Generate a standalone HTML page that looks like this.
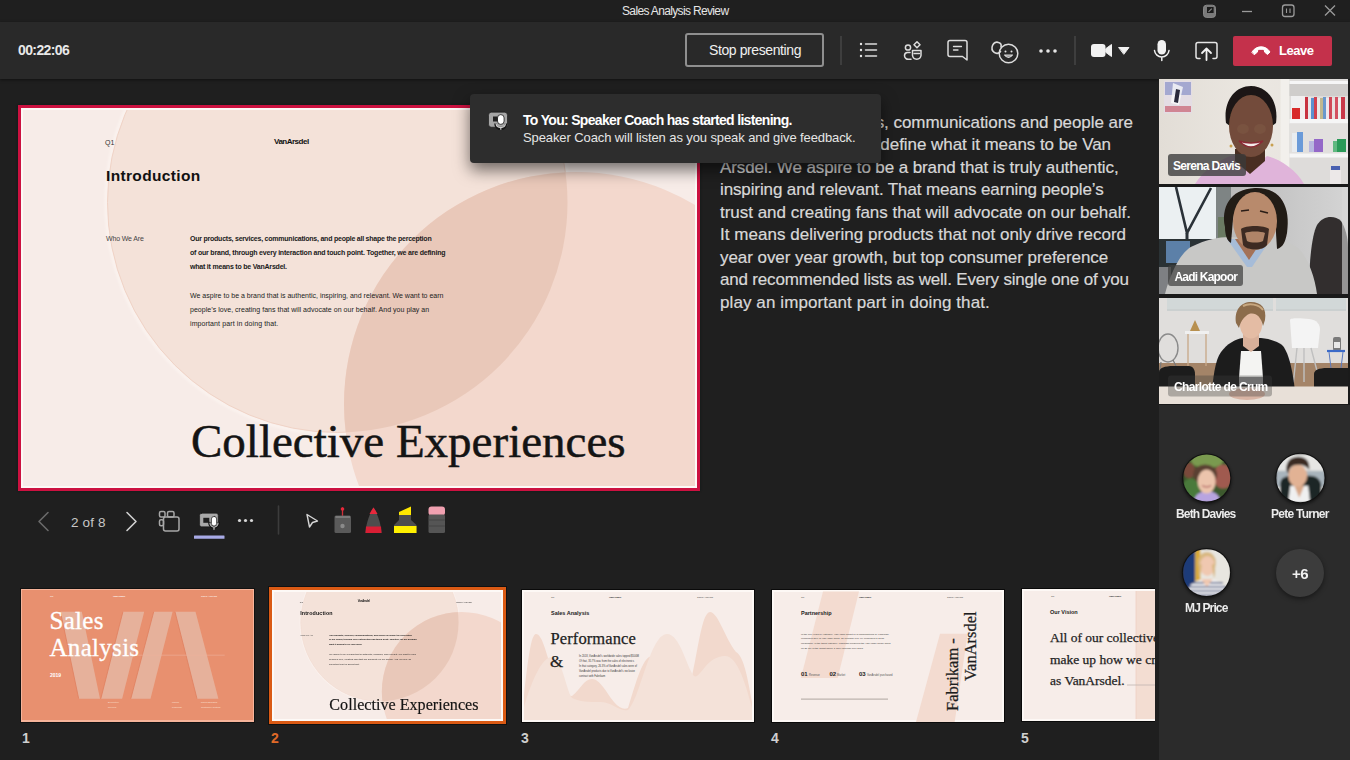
<!DOCTYPE html>
<html><head><meta charset="utf-8">
<style>
*{margin:0;padding:0;box-sizing:border-box}
html,body{width:1350px;height:760px;overflow:hidden;background:#1f1f1f;font-family:"Liberation Sans",sans-serif;color:#fff}
.a{position:absolute}
.t{position:absolute;white-space:nowrap;line-height:1}
svg{position:absolute;overflow:visible}
</style></head><body>

<!-- title bar -->
<div class="a" style="left:0;top:0;width:1350px;height:22px;background:#1f1f1f"></div>
<div class="t" style="left:622px;top:5px;font-size:12px;letter-spacing:-0.65px;color:#e6e6e6">Sales Analysis Review</div>

<!-- toolbar -->
<div class="a" style="left:0;top:22px;width:1350px;height:57px;background:#292929;box-shadow:0 1px 3px rgba(0,0,0,.5)"></div>
<div class="t" style="left:18px;top:43px;font-size:14px;font-weight:700;letter-spacing:-0.6px;color:#e8e8e8">00:22:06</div>

<!-- stop presenting -->
<div class="a" style="left:685px;top:33px;width:139px;height:34px;border:2px solid #8f8f8f;border-radius:3px"></div>
<div class="t" style="left:709px;top:43px;font-size:14px;letter-spacing:-0.4px;color:#f0f0f0">Stop presenting</div>
<div class="a" style="left:840px;top:36px;width:2px;height:29px;background:#3e3e3e"></div>
<div class="a" style="left:1074px;top:36px;width:2px;height:29px;background:#3e3e3e"></div>

<!-- leave -->
<div class="a" style="left:1233px;top:36px;width:99px;height:30px;background:#c4314b;border-radius:2px"></div>
<div class="t" style="left:1279px;top:44px;font-size:13px;font-weight:700;letter-spacing:-0.5px;color:#fff">Leave</div>


<!-- window controls -->
<svg width="1350" height="22" style="left:0;top:0" fill="none" stroke="#9a9a9a" stroke-width="1.3">
 <rect x="1203.5" y="5.2" width="12" height="12.2" rx="3" fill="#7a7a7a" stroke="#888" stroke-width="1"/>
 <rect x="1207" y="7" width="6.6" height="6" fill="#1c1c1c" stroke="none"/>
 <path d="M1208.5 11.8 L1211.8 8.6" stroke="#8a8a8a" stroke-width="1.1"/>
 <path d="M1242 11.5 H1252"/>
 <rect x="1282.5" y="5" width="11.5" height="11.5" rx="2.5"/>
 <path d="M1286.5 8.5 V13 M1290 8.5 V13" stroke-width="1.1"/>
 <path d="M1325 5.5 L1335 15.5 M1335 5.5 L1325 15.5"/>
</svg>

<!-- toolbar icons -->
<svg width="1350" height="79" style="left:0;top:0" fill="none" stroke="#dcdcdc" stroke-width="1.5" stroke-linecap="round" stroke-linejoin="round">
 <!-- list -->
 <g fill="#e6e6e6" stroke="none"><circle cx="861" cy="44" r="1.2"/><circle cx="861" cy="50" r="1.2"/><circle cx="861" cy="56" r="1.2"/></g>
 <path d="M865.5 44 H876.5 M865.5 50 H876.5 M865.5 56 H876.5"/>
 <!-- people -->
 <circle cx="908" cy="47.5" r="2.6"/>
 <path d="M910 52.5 H907.5 A3.2 3.2 0 0 0 904.5 55.7 A3.8 3.8 0 0 0 908.5 59.3 H911"/>
 <path d="M917 41.8 L920 44.8 L917 47.8 L914 44.8 Z"/>
 <path d="M912.5 50.5 V55.5 A4.3 4.3 0 0 0 921 55.5 V50.5 Z"/>
 <path d="M914 53.5 H919.5" stroke-width="1.3"/>
 <!-- chat -->
 <path d="M950 40.5 H965 A2 2 0 0 1 967 42.5 V60 L962.5 56.5 H950 A2 2 0 0 1 948 54.5 V42.5 A2 2 0 0 1 950 40.5 Z"/>
 <path d="M953.5 46.5 H961.5 M953.5 50 H958" stroke-width="1.3"/>
 <!-- react -->
 <circle cx="1008.5" cy="53.5" r="9.3"/>
 <circle cx="1005.5" cy="51.5" r="1" fill="#e6e6e6" stroke="none"/>
 <circle cx="1011.5" cy="51.5" r="1" fill="#e6e6e6" stroke="none"/>
 <path d="M1004.5 55 Q1008.5 60 1012.5 55 Z" fill="#9a9a9a" stroke-width="1.2"/>
 <path d="M1000.5 51.5 A4.8 5.6 0 1 1 998.5 42.5 C1001 43 1001.5 45 1001 47" stroke-width="1.6"/>
 <circle cx="997.5" cy="49.5" r="1.1" fill="#222" stroke="none"/>
 <!-- more -->
 <g fill="#e6e6e6" stroke="none"><circle cx="1041" cy="51" r="1.8"/><circle cx="1048" cy="51" r="1.8"/><circle cx="1055" cy="51" r="1.8"/></g>
 <!-- camera -->
 <rect x="1091" y="44" width="14.5" height="13" rx="3" fill="#f2f2f2" stroke="none"/>
 <path d="M1106 48.5 L1111.5 44.5 V56.5 L1106 52.5 Z" fill="#f2f2f2" stroke="#f2f2f2" stroke-width="1"/>
 <path d="M1119 47.5 H1129 L1124 54 Z" fill="#f2f2f2" stroke="#f2f2f2" stroke-width="1"/>
 <!-- mic -->
 <rect x="1157.5" y="40" width="8.5" height="14.5" rx="4.25" fill="#f2f2f2" stroke="none"/>
 <path d="M1154.5 50.5 A7.3 7.3 0 0 0 1169 50.5 M1161.8 57.8 V60.5" stroke="#f2f2f2"/>
 <!-- share -->
 <path d="M1200 58.5 H1198 A2 2 0 0 1 1196 56.5 V44.5 A2 2 0 0 1 1198 42.5 H1215 A2 2 0 0 1 1217 44.5 V56.5 A2 2 0 0 1 1215 58.5 H1213" stroke="#e6e6e6"/>
 <path d="M1206.5 60 V48.5 M1202 53 L1206.5 48.5 L1211 53" stroke="#f2f2f2" stroke-width="1.8"/>
 <!-- phone -->
 <path d="M1252 52 C1256 45 1266 45 1270 52 L1267.5 54.5 L1264.5 52 V50 C1262 49 1260 49 1257.5 50 V52 L1254.5 54.5 Z" fill="#fff" stroke="#fff" stroke-width="1"/>
</svg>

<!-- main slide frame -->
<div class="a" style="left:18px;top:105px;width:682px;height:386px;background:#cc1140;box-shadow:0 0 2px #0c1a18"></div>
<div class="a" id="slide" style="left:21px;top:108px;width:676px;height:380px;background:#f7ece8;overflow:hidden">
<svg width="676" height="380" style="left:0;top:0">
 <defs>
  <clipPath id="cA"><circle cx="316.5" cy="94.5" r="230"/></clipPath>
  <filter id="bl" x="-10%" y="-10%" width="120%" height="120%"><feGaussianBlur stdDeviation="1.2"/></filter>
 </defs>
 <circle cx="316.5" cy="94.5" r="231.5" fill="none" stroke="#fbf3ef" stroke-width="3" filter="url(#bl)"/>
 <circle cx="316.5" cy="94.5" r="230" fill="#f4e2d9" stroke="#f0d3c6" stroke-width="1"/>
 <circle cx="555" cy="296" r="232" fill="#f3d8cd"/>
 <circle cx="555" cy="296" r="232" fill="#e9c8b9" clip-path="url(#cA)"/>
</svg>
<div class="t" style="left:84px;top:31px;font-size:7px;color:#333">Q1</div>
<div class="t" style="left:253px;top:30px;font-size:8px;font-weight:700;letter-spacing:-0.5px;color:#111">VanArsdel</div>
<div class="t" style="left:85px;top:60px;font-size:15.5px;font-weight:700;letter-spacing:0.35px;color:#111">Introduction</div>
<div class="t" style="left:85px;top:127px;font-size:7px;letter-spacing:-0.15px;color:#444">Who We Are</div>
<div class="t" style="left:169px;top:127px;font-size:7px;font-weight:700;letter-spacing:-0.23px;color:#1a1a1a">Our products, services, communications, and people all shape the perception</div>
<div class="t" style="left:169px;top:141px;font-size:7px;font-weight:700;letter-spacing:-0.2px;color:#1a1a1a">of our brand, through every interaction and touch point. Together, we are defining</div>
<div class="t" style="left:169px;top:155px;font-size:7px;font-weight:700;letter-spacing:-0.21px;color:#1a1a1a">what it means to be VanArsdel.</div>
<div class="t" style="left:169px;top:184px;font-size:7px;letter-spacing:0.01px;color:#222">We aspire to be a brand that is authentic, inspiring, and relevant. We want to earn</div>
<div class="t" style="left:169px;top:198px;font-size:7px;letter-spacing:0.03px;color:#222">people’s love, creating fans that will advocate on our behalf. And you play an</div>
<div class="t" style="left:169px;top:212px;font-size:7px;letter-spacing:0.11px;color:#222">important part in doing that.</div>
<div class="t" style="left:170px;top:310px;font-family:'Liberation Serif',serif;font-size:47px;color:#141414;-webkit-text-stroke:0.5px #141414">Collective Experiences</div>
</div>

<div class="a" style="left:21px;top:108px;width:676px;height:380px;box-shadow:inset 0 0 0 2px #fdf9f6"></div>
<!-- notes -->
<div class="t" style="right:217px;top:114px;font-size:17px;letter-spacing:-0.05px;color:#d8d8d8;-webkit-text-stroke:0.2px #d8d8d8">Our products, services, communications and people are</div>
<div class="t" style="right:239px;top:136px;font-size:17px;letter-spacing:-0.05px;color:#d8d8d8;-webkit-text-stroke:0.2px #d8d8d8">the foundation of how we define what it means to be Van</div>
<div class="t" style="left:720px;top:159px;font-size:17px;letter-spacing:-0.10px;color:#d8d8d8;-webkit-text-stroke:0.2px #d8d8d8">Arsdel. We aspire to be a brand that is truly authentic,</div>
<div class="t" style="left:720px;top:181px;font-size:17px;letter-spacing:-0.12px;color:#d8d8d8;-webkit-text-stroke:0.2px #d8d8d8">inspiring and relevant. That means earning people’s</div>
<div class="t" style="left:720px;top:204px;font-size:17px;letter-spacing:-0.02px;color:#d8d8d8;-webkit-text-stroke:0.2px #d8d8d8">trust and creating fans that will advocate on our behalf.</div>
<div class="t" style="left:720px;top:226px;font-size:17px;letter-spacing:0.03px;color:#d8d8d8;-webkit-text-stroke:0.2px #d8d8d8">It means delivering products that not only drive record</div>
<div class="t" style="left:720px;top:249px;font-size:17px;letter-spacing:-0.06px;color:#d8d8d8;-webkit-text-stroke:0.2px #d8d8d8">year over year growth, but top consumer preference</div>
<div class="t" style="left:720px;top:271px;font-size:17px;letter-spacing:-0.18px;color:#d8d8d8;-webkit-text-stroke:0.2px #d8d8d8">and recommended lists as well. Every single one of you</div>
<div class="t" style="left:720px;top:294px;font-size:17px;letter-spacing:0.09px;color:#d8d8d8;-webkit-text-stroke:0.2px #d8d8d8">play an important part in doing that.</div>

<!-- toast -->
<div class="a" style="left:470px;top:94px;width:411px;height:69px;background:#2d2d2d;border-radius:4px;box-shadow:0 7px 16px rgba(0,0,0,.55)"></div>
<svg width="30" height="30" style="left:480px;top:105px">
 <rect x="8.5" y="7.2" width="19" height="15" rx="3" fill="#a6a6a6" stroke="#111" stroke-width="0.6"/>
 <rect x="13" y="11.5" width="5" height="5" fill="#222"/>
 <path d="M15.5 18.5 A5 5 0 0 0 26 18.5" stroke="#151515" stroke-width="2.6" fill="none"/>
 <path d="M16 18.5 A4.8 4.8 0 0 0 25.5 18.5 M20.8 23.3 V24.8" stroke="#cfcfcf" stroke-width="1.2" fill="none"/>
 <rect x="17.5" y="9.6" width="6.6" height="9.8" rx="3.3" fill="#fff" stroke="#111" stroke-width="0.8"/>
</svg>
<div class="t" style="left:523px;top:113px;font-size:14px;font-weight:700;letter-spacing:-0.68px;color:#fff">To You: Speaker Coach has started listening.</div>
<div class="t" style="left:523px;top:131px;font-size:13px;letter-spacing:-0.1px;color:#e6e6e6">Speaker Coach will listen as you speak and give feedback.</div>



<!-- slide controls -->
<svg width="480" height="60" style="left:0;top:495px" fill="none" stroke-linecap="round" stroke-linejoin="round">
 <path d="M48 17.5 L39 26.5 L48 35.5" stroke="#6a6a6a" stroke-width="1.6"/>
 <path d="M127 17.5 L136 26.5 L127 35.5" stroke="#d0d0d0" stroke-width="1.6"/>
 <!-- grid icon -->
 <g stroke="#a8a8a8" stroke-width="1.5">
  <rect x="159.5" y="16.5" width="5.5" height="5.5" rx="1.5"/>
  <rect x="167.5" y="16.5" width="6.5" height="5.5" rx="1.5"/>
  <rect x="159.5" y="24.8" width="4" height="6" rx="1.5"/>
  <rect x="163.5" y="22" width="15.5" height="14" rx="2"/>
 </g>
 <!-- speaker coach icon -->
 <g>
  <rect x="199.6" y="18.2" width="18.6" height="13.6" rx="2" fill="#a8a8a8" stroke="#111" stroke-width="0.6"/>
  <rect x="203.3" y="22.8" width="6" height="5" fill="#1e1e1e"/>
  <path d="M209.5 28 A4.5 4.5 0 0 0 218.5 28" stroke="#111" stroke-width="2.6" fill="none"/>
  <path d="M210 28 A4 4 0 0 0 218 28 M214 32 V34.3" stroke="#c8c8c8" stroke-width="1.2" fill="none"/>
  <rect x="211.4" y="21.4" width="5.2" height="9.6" rx="2.6" fill="#fff" stroke="#111" stroke-width="0.7"/>
 </g>
 <rect x="194" y="40.5" width="30.5" height="3.3" rx="0.5" fill="#a8aae6"/>
 <g fill="#d8d8d8"><circle cx="239.5" cy="25.5" r="1.6"/><circle cx="245.5" cy="25.5" r="1.6"/><circle cx="251.5" cy="25.5" r="1.6"/></g>
 <path d="M278.5 11 V39" stroke="#3c3c3c" stroke-width="1.6"/>
 <!-- pointer -->
 <path d="M307 19.5 L317.5 26 L312.5 27.5 L309.5 32 Z" stroke="#d6d6d6" stroke-width="1.4"/>
 <!-- laser -->
 <path d="M342.5 13 V21" stroke="#d0303a" stroke-width="1.3"/>
 <circle cx="342.5" cy="14" r="1.8" fill="#e8283a"/>
 <rect x="334.5" y="20.5" width="16.5" height="17.5" rx="1.5" fill="#5a5a5a"/>
 <rect x="335.5" y="21" width="14.5" height="2" fill="#7a7a7a"/>
 <circle cx="342.5" cy="31" r="2.2" fill="#8a8a8a"/>
 <!-- red pen -->
 <path d="M373.5 12.5 C370 18 366 28 365.5 38 H381.5 C381 28 377 18 373.5 12.5 Z" fill="#4d4d4d"/>
 <path d="M373.5 12.5 C372 14.5 370.5 17 369.5 19 H377.5 C376.5 17 375 14.5 373.5 12.5 Z" fill="#e8283c"/>
 <path d="M366 31.5 H381 L381.5 38 H365.5 Z" fill="#d81e34"/>
 <!-- highlighter -->
 <path d="M399 17 L411 11.5 V21 H399 Z" fill="#ffe800"/>
 <path d="M399 20 H411 V25 L416.5 30 V38 H394 V30 L399 25 Z" fill="#4d4d4d"/>
 <rect x="394" y="31" width="22.5" height="7" fill="#fff000"/>
 <!-- eraser -->
 <rect x="428.5" y="11.5" width="16.5" height="9" rx="3" fill="#f0a0b0"/>
 <rect x="428.5" y="19.5" width="16.5" height="18.5" rx="1.5" fill="#555"/>
 <path d="M429 25 H444.5 M429 31 H444.5" stroke="#444" stroke-width="1"/>
</svg>
<div class="t" style="left:71px;top:515.5px;font-size:13.5px;letter-spacing:0.15px;color:#c8c8c8">2 of 8</div>


<!-- thumbnails -->
<div class="a" style="left:20px;top:588px;width:235px;height:135px;background:#111"></div>
<div class="a" style="left:21px;top:589px;width:233px;height:133px;background:#f6b49a;overflow:hidden">
<svg width="233" height="133" style="left:0;top:0">
 <rect x="1" y="1" width="231" height="130" fill="#e8906f"/>
 <g fill="#e6b19b">
  <path d="M39.5 22.8 H60.8 L79 109.7 H57.7 Z"/>
  <path d="M101.9 22.8 H123.2 L101.1 109.7 H79.8 Z"/>
  <path d="M132.7 22.8 H151.6 L129.5 109.7 H109.8 Z"/>
  <path d="M154 22.8 H174.5 L197.4 109.7 H176 Z"/>
 </g>
 <g stroke="#e07f5e" stroke-width="0.8" fill="none">
  <path d="M39.5 22.8 L57.7 109.7 M79.8 109.7 L101.9 22.8 M109.8 109.7 L132.7 22.8 M154 22.8 L176 109.7"/>
 </g>
 <path d="M113.7 66.2 H203.7" stroke="#efb49c" stroke-width="0.6"/>
</svg>
<div class="t" style="left:28.5px;top:19px;font-family:'Liberation Serif',serif;font-size:25px;color:#fff;letter-spacing:0.3px;-webkit-text-stroke:0.3px #fff">Sales</div>
<div class="t" style="left:28.5px;top:46px;font-family:'Liberation Serif',serif;font-size:25px;color:#fff;letter-spacing:0.3px;-webkit-text-stroke:0.3px #fff">Analysis</div>
<div class="t" style="left:29px;top:84px;font-size:5px;font-weight:700;color:#fff">2019</div>
<div class="t" style="left:29px;top:7px;font-size:2.5px;color:#fff">Q1</div>
<div class="t" style="left:92px;top:7px;font-size:2.5px;font-weight:700;color:#fff">VanArsdel</div>
<div class="t" style="left:180px;top:7px;font-size:2.5px;color:#fff">Sales Analysis</div>
<div class="t" style="left:87px;top:112px;font-size:2.5px;color:#fce0d4;line-height:4.6px">Executive<br>Review</div>
<div class="t" style="left:151px;top:112px;font-size:2.5px;color:#fce0d4;line-height:4.6px">March<br>Planning</div>
<div class="t" style="left:180px;top:112px;font-size:2.5px;color:#fce0d4;line-height:4.6px">Rapid Building<br>Customer Testing</div>
</div>

<!-- thumb 2 selected -->
<div class="a" style="left:268px;top:586px;width:239px;height:139px;background:#111"></div>
<div class="a" style="left:269px;top:587px;width:237px;height:137px;background:#da5a14"></div>
<div class="a" style="left:272px;top:590px;width:231px;height:131px;background:#fdf8f5"></div>
<div class="a" style="left:272px;top:590px;width:231px;height:131px;overflow:hidden">
 <div class="a" style="left:-1px;top:0;width:676px;height:380px;background:#f7ece8;transform:scale(0.3432);transform-origin:0 0">
<svg width="676" height="380" style="left:0;top:0">
 <defs>
  <clipPath id="cA2"><circle cx="316.5" cy="94.5" r="230"/></clipPath>
  <filter id="bl2" x="-10%" y="-10%" width="120%" height="120%"><feGaussianBlur stdDeviation="1.2"/></filter>
 </defs>
 <circle cx="316.5" cy="94.5" r="231.5" fill="none" stroke="#fbf3ef" stroke-width="3" filter="url(#bl2)"/>
 <circle cx="316.5" cy="94.5" r="230" fill="#f4e2d9" stroke="#f0d3c6" stroke-width="1"/>
 <circle cx="555" cy="296" r="232" fill="#f3d8cd"/>
 <circle cx="555" cy="296" r="232" fill="#e9c8b9" clip-path="url(#cA2)"/>
</svg>
<div class="t" style="left:84px;top:31px;font-size:7px;color:#333">Q1</div>
<div class="t" style="left:253px;top:30px;font-size:8px;font-weight:700;letter-spacing:-0.5px;color:#111">VanArsdel</div>
<div class="t" style="left:85px;top:60px;font-size:15.5px;font-weight:700;letter-spacing:0.35px;color:#111">Introduction</div>
<div class="t" style="left:85px;top:127px;font-size:7px;letter-spacing:-0.15px;color:#444">Who We Are</div>
<div class="t" style="left:169px;top:127px;font-size:7px;font-weight:700;letter-spacing:-0.23px;color:#1a1a1a">Our products, services, communications, and people all shape the perception</div>
<div class="t" style="left:169px;top:141px;font-size:7px;font-weight:700;letter-spacing:-0.2px;color:#1a1a1a">of our brand, through every interaction and touch point. Together, we are defining</div>
<div class="t" style="left:169px;top:155px;font-size:7px;font-weight:700;letter-spacing:-0.21px;color:#1a1a1a">what it means to be VanArsdel.</div>
<div class="t" style="left:169px;top:184px;font-size:7px;letter-spacing:0.01px;color:#222">We aspire to be a brand that is authentic, inspiring, and relevant. We want to earn</div>
<div class="t" style="left:169px;top:198px;font-size:7px;letter-spacing:0.03px;color:#222">people’s love, creating fans that will advocate on our behalf. And you play an</div>
<div class="t" style="left:169px;top:212px;font-size:7px;letter-spacing:0.11px;color:#222">important part in doing that.</div>
<div class="t" style="left:170px;top:310px;font-family:'Liberation Serif',serif;font-size:47px;color:#141414;-webkit-text-stroke:0.5px #141414">Collective Experiences</div>

  <div class="t" style="left:540px;top:31px;font-size:7px;color:#333">Sales Analysis</div>
 </div>
 <div class="a" style="left:0;top:0;width:231px;height:131px;box-shadow:inset 0 0 0 2px #fdf9f6"></div>
</div>

<!-- thumb 3 -->
<div class="a" style="left:521px;top:589px;width:234px;height:134px;background:#0a0a0a"></div>
<div class="a" style="left:522px;top:590px;width:232px;height:132px;background:#fdf8f5;overflow:hidden">
<svg width="232" height="132" style="left:0;top:0">
 <rect x="2" y="2" width="228" height="128" fill="#f7ede9"/>
 <path d="M2 130 V105 C6 70 9 44 14 44 C20 44 24 62 31 84 C38 98 44 106 50 106 C58 100 62 89 70 89 C78 89 84 102 92 112 C97 118 102 120 106 118 C112 100 120 66 130 66 L142 66 L160 86 C164 90 168 90 170 86 C176 60 180 22 188 22 C196 22 204 50 214 62 C222 66 226 90 230 112 V130 Z" fill="#f2d9cd"/>
 <path d="M2 130 V117 C10 90 20 67 30 67 C40 67 44 100 50 108 C58 112 66 112 78 112 C90 112 98 122 106 120 C118 110 128 44 145 44 C158 44 164 76 172 86 C178 90 184 66 203 66 C216 66 224 96 230 118 V130 Z" fill="#f4e2d9"/>
</svg>
<div class="t" style="left:29px;top:7px;font-size:2.5px;color:#444">Q1</div>
<div class="t" style="left:87px;top:7px;font-size:2.5px;font-weight:700;color:#222">VanArsdel</div>
<div class="t" style="left:175px;top:7px;font-size:2.5px;color:#444">Sales Analysis</div>
<div class="t" style="left:29px;top:21px;font-size:5.5px;font-weight:700;color:#222">Sales Analysis</div>
<div class="t" style="left:28.5px;top:41px;font-family:'Liberation Serif',serif;font-size:16.5px;color:#1e1e1e;letter-spacing:0.1px;-webkit-text-stroke:0.25px #1e1e1e">Performance</div>
<div class="t" style="left:28px;top:63px;font-family:'Liberation Serif',serif;font-size:17px;color:#1e1e1e;-webkit-text-stroke:0.25px #1e1e1e">&amp;</div>
<div class="t" style="left:57px;top:63.5px;font-size:2.6px;line-height:5px;color:#3a3a3a">In 2018, VanArsdel's worldwide sales topped $500M<br>Of that, 35.7% was from the sales of electronics<br>In that category, 26.3% of VanArsdel sales were of<br>VanArsdel products due to VanArsdel's exclusive<br>contract with Fabrikam</div>
</div>

<!-- thumb 4 -->
<div class="a" style="left:771px;top:589px;width:234px;height:134px;background:#0a0a0a"></div>
<div class="a" style="left:772px;top:590px;width:232px;height:132px;background:#fdf8f5;overflow:hidden">
<svg width="232" height="132" style="left:0;top:0">
 <rect x="2" y="2" width="228" height="128" fill="#f7ede9"/>
 <path d="M51 1.4 H87 L65.7 88 H28.9 Z" fill="#f3dbd0"/>
 <path d="M168 43.8 H195.6 L182.7 132 H144 Z" fill="#f3dbd0"/>
 <path d="M29 109.2 H116" stroke="#bdb3ae" stroke-width="1.3"/>
</svg>
<div class="t" style="left:29px;top:7px;font-size:2.5px;color:#444">Q1</div>
<div class="t" style="left:87px;top:7px;font-size:2.5px;font-weight:700;color:#222">VanArsdel</div>
<div class="t" style="left:175px;top:7px;font-size:2.5px;color:#444">Sales Analysis</div>
<div class="t" style="left:29px;top:20.5px;font-size:5.5px;font-weight:700;color:#222">Partnership</div>
<div class="t" style="left:29px;top:42.5px;font-size:2.5px;line-height:4.9px;color:#3a3a3a">In the five years TV category, VanArsdel Smart TV's manufactured by Fabrikam<br>comprised 31% of VanArsdel sales, an increase of 5.4% compared to 2018.<br>Meanwhile, in the tablet category, Fabrikam produced the VanArsdel model sales<br>up 21.3% of the Smart sales, a 18% increase over 2018.</div>
<div class="t" style="left:29px;top:81px;font-size:6px;font-weight:700;color:#222">01</div>
<div class="t" style="left:57.5px;top:81px;font-size:6px;font-weight:700;color:#222">02</div>
<div class="t" style="left:87px;top:81px;font-size:6px;font-weight:700;color:#222">03</div>
<div class="t" style="left:37px;top:85px;font-size:2.7px;color:#555">Revenue</div>
<div class="t" style="left:65px;top:85px;font-size:2.7px;color:#555">Market</div>
<div class="t" style="left:95px;top:85px;font-size:2.7px;color:#555">VanArsdel purchased</div>
<div class="t" style="left:173px;top:121px;font-family:'Liberation Serif',serif;font-size:16.5px;color:#1e1e1e;-webkit-text-stroke:0.25px #1e1e1e;transform:rotate(-90deg);transform-origin:0 0">Fabrikam -</div>
<div class="t" style="left:191px;top:91px;font-family:'Liberation Serif',serif;font-size:16.5px;color:#1e1e1e;-webkit-text-stroke:0.25px #1e1e1e;transform:rotate(-90deg);transform-origin:0 0">VanArsdel</div>
</div>

<!-- thumb 5 -->
<div class="a" style="left:1021px;top:588px;width:140px;height:134px;background:#0a0a0a"></div>
<div class="a" style="left:1022px;top:589px;width:136px;height:132px;background:#fdf8f5;overflow:hidden">
<svg width="136" height="132" style="left:0;top:0">
 <rect x="2" y="2" width="134" height="128" fill="#f7ede9"/>
 <rect x="114" y="2" width="22" height="128" fill="#f3ddd2"/>
 <path d="M114 2 V130" stroke="#efcfc2" stroke-width="0.8"/>
 <path d="M105 96 H136" stroke="#c0b5b0" stroke-width="0.8"/>
</svg>
<div class="t" style="left:29px;top:7px;font-size:2.5px;color:#444">Q1</div>
<div class="t" style="left:87px;top:7px;font-size:2.5px;font-weight:700;color:#222">VanArsdel</div>
<div class="t" style="left:28px;top:20.5px;font-size:5.5px;font-weight:700;color:#222">Our Vision</div>
<div class="t" style="left:28px;top:42px;font-family:'Liberation Serif',serif;font-size:13.5px;color:#1e1e1e;-webkit-text-stroke:0.25px #1e1e1e">All of our collective</div>
<div class="t" style="left:28px;top:64px;font-family:'Liberation Serif',serif;font-size:13.5px;color:#1e1e1e;-webkit-text-stroke:0.25px #1e1e1e">make up how we create</div>
<div class="t" style="left:28px;top:85px;font-family:'Liberation Serif',serif;font-size:13.5px;color:#1e1e1e;-webkit-text-stroke:0.25px #1e1e1e">as VanArsdel.</div>
</div>
<div class="a" style="left:1155px;top:580px;width:4px;height:160px;background:#1f1f1f"></div>

<!-- page numbers -->
<div class="t" style="left:22px;top:731px;font-size:14px;font-weight:700;color:#cfcfcf">1</div>
<div class="t" style="left:271px;top:731px;font-size:14px;font-weight:700;color:#e06a28">2</div>
<div class="t" style="left:521px;top:731px;font-size:14px;font-weight:700;color:#cfcfcf">3</div>
<div class="t" style="left:771px;top:731px;font-size:14px;font-weight:700;color:#cfcfcf">4</div>
<div class="t" style="left:1021px;top:731px;font-size:14px;font-weight:700;color:#cfcfcf">5</div>

<!-- right panel -->
<div class="a" style="left:1159px;top:79px;width:191px;height:681px;background:#2b2b2b"></div>
<div class="a" style="left:1159px;top:79px;width:191px;height:326px;background:#1a1a1a"></div>

<!-- tile 1: Serena -->
<div class="a" style="left:1159px;top:79px;width:189px;height:105px;overflow:hidden;background:#e8e4dd">
<svg width="189" height="105" style="left:0;top:0">
 <defs><filter id="sf1" x="-5%" y="-5%" width="110%" height="110%"><feGaussianBlur stdDeviation="0.6"/></filter>
 <linearGradient id="wall1" x1="0" x2="1"><stop offset="0" stop-color="#e2ddd6"/><stop offset="0.5" stop-color="#ebe7e1"/><stop offset="1" stop-color="#e6e3de"/></linearGradient></defs>
 <rect width="189" height="105" fill="url(#wall1)"/>
 <g filter="url(#sf1)">
 <!-- poster -->
 <rect x="5" y="1.5" width="28" height="33" fill="#e4dde4"/>
 <path d="M6 3 H32 V16 H6 Z" fill="#a4a8d0"/>
 <path d="M14 4 L24 8 L20 26 L12 24 Z" fill="#fafafa" opacity=".8"/>
 <path d="M17 10 L21 11 L19 24 L15 23 Z" fill="#2a2a3a"/>
 <path d="M6 27 H32 V33 H6 Z" fill="#c86070" opacity=".7"/>
 <!-- shelf -->
 <rect x="121.5" y="0" width="9" height="105" fill="#f2f0ec"/>
 <rect x="130.5" y="0" width="58.5" height="105" fill="#dedcda"/>
 <rect x="130.5" y="2" width="58.5" height="3" fill="#f6f6f6"/>
 <rect x="130.5" y="5" width="58.5" height="12" fill="#cfcdcb"/>
 <rect x="132" y="17" width="9" height="23" fill="#f0f0f0"/>
 <rect x="133" y="29" width="8" height="11" fill="#d82c2c"/>
 <rect x="141" y="17" width="5" height="23" fill="#f2eeee"/>
 <rect x="146" y="18" width="3" height="22" fill="#c83040"/>
 <rect x="149" y="18" width="3" height="22" fill="#e8e6ea"/>
 <rect x="152" y="19" width="3" height="21" fill="#5a90d0"/>
 <rect x="155" y="18" width="3" height="22" fill="#d04050"/>
 <rect x="158" y="19" width="3" height="21" fill="#e8e8e8"/>
 <rect x="161" y="19" width="3" height="21" fill="#c0b890"/>
 <rect x="164" y="18" width="3" height="22" fill="#6a98cc"/>
 <rect x="167" y="19" width="3" height="21" fill="#f0e8ec"/>
 <rect x="170" y="18" width="3" height="22" fill="#d04858"/>
 <rect x="173" y="19" width="3" height="21" fill="#e8e0e0"/>
 <rect x="176" y="18" width="3" height="22" fill="#d45060"/>
 <rect x="179" y="19" width="3" height="21" fill="#eee"/>
 <rect x="182" y="18" width="4" height="22" fill="#c83848"/>
 <rect x="130.5" y="40" width="58.5" height="4.5" fill="#f6f6f6"/>
 <rect x="130.5" y="44.5" width="58.5" height="30" fill="#e2e0de"/>
 <rect x="133" y="54" width="5" height="19" fill="#e8ecf0"/>
 <rect x="138" y="53" width="6" height="20" fill="#6a9ad8"/>
 <rect x="150" y="62" width="6" height="11" fill="#b8b8e0"/>
 <rect x="155" y="60" width="9" height="13" fill="#9468c8"/>
 <rect x="174" y="62" width="5" height="11" fill="#60b880"/>
 <rect x="178" y="60" width="9" height="13" fill="#2a9a58"/>
 <rect x="130.5" y="74.5" width="58.5" height="4" fill="#f6f6f6"/>
 <rect x="171" y="91" width="11" height="14" fill="#ece8e8"/>
 <rect x="172" y="87" width="9" height="4" fill="#4a60b0"/>
 <!-- person -->
 <path d="M36 105 C44 92 60 80 75 76 L90 93 L108 77 C122 80 138 92 145 105 Z" fill="#e0b4da"/>
 <path d="M76 70 H106 V82 L91 95 L76 82 Z" fill="#4a2e22"/>
 <path d="M67 44 C64 22 76 7 92 7 C108 7 120 22 117 44 L113 47 C110 30 102 22 92 22 C82 22 74 30 71 47 Z" fill="#1a1614"/>
 <ellipse cx="92" cy="47" rx="22" ry="31" fill="#734c3a"/>
 <ellipse cx="84" cy="50" rx="6" ry="5" fill="#7a5442" opacity=".8"/>
 <ellipse cx="101" cy="50" rx="6" ry="5" fill="#7a5442" opacity=".8"/>
 <path d="M80 62 Q92 74 104 62 Q92 66 80 62 Z" fill="#f4eeec" stroke="#8a2a34" stroke-width="1.5"/>
 <circle cx="72" cy="67" r="1.5" fill="#c8a050"/><circle cx="113" cy="66" r="1.5" fill="#c8a050"/>
 </g>
 <rect x="9" y="75" width="78" height="22" rx="3" fill="rgba(58,58,58,.78)"/>
</svg>
 <div class="t" style="left:14px;top:81px;font-size:12px;font-weight:700;letter-spacing:-0.7px;color:#fff">Serena Davis</div>
</div>

<!-- tile 2: Aadi -->
<div class="a" style="left:1159px;top:187px;width:189px;height:107px;overflow:hidden;background:#b8b8b8">
<svg width="189" height="107" style="left:0;top:0">
 <defs><filter id="sf2" x="-5%" y="-5%" width="110%" height="110%"><feGaussianBlur stdDeviation="0.7"/></filter>
 <linearGradient id="wall2" x1="0" x2="1"><stop offset="0" stop-color="#a8a8a8"/><stop offset="0.6" stop-color="#c4c4c4"/><stop offset="1" stop-color="#d4d4d4"/></linearGradient></defs>
 <rect width="189" height="107" fill="url(#wall2)"/>
 <g filter="url(#sf2)">
 <rect x="0" y="0" width="57" height="53" fill="#ebf0f2"/>
 <rect x="57" y="0" width="15" height="53" fill="#7e8484"/>
 <rect x="59" y="30" width="10" height="23" fill="#6a7a62"/>
 <path d="M17 0 L28 46 L52 1" stroke="#2a3038" stroke-width="2.6" fill="none"/>
 <path d="M28 46 V53" stroke="#2a3038" stroke-width="3"/>
 <rect x="0" y="52" width="72" height="55" fill="#2c3036"/>
 <rect x="7" y="54" width="24" height="22" fill="#5c80a8"/>
 <rect x="0" y="80" width="12" height="27" fill="#d0d0d0" opacity=".5"/>
 <path d="M150 107 C150 80 152 50 158 38 C164 28 176 28 182 34 C186 40 189 50 189 60 V107 Z" fill="#302e2e"/><rect x="183" y="0" width="6" height="107" fill="#d8d8d8" opacity=".6"/>
 <!-- person -->
 <path d="M6 107 C12 85 22 64 34 59 C46 53 60 50 70 50 L110 52 C122 53 132 55 140 62 C150 72 156 92 158 107 Z" fill="#c8c8c6"/>
 <path d="M68 52 H112 L93 80 H88 Z" fill="#a6bcd8"/>
 <path d="M76 52 H104 L90 73 Z" fill="#a47258"/>
 <path d="M66 40 C62 22 70 2 96 1 C122 0 132 20 128 46 C126 56 124 60 118 62 L116 30 C110 18 100 14 92 14 C82 14 76 22 74 32 L72 56 C68 54 66 48 66 40 Z" fill="#221a14"/>
 <ellipse cx="96" cy="34" rx="22" ry="29" fill="#b88a6c"/>
 <path d="M82 42 C86 38 106 38 110 42 L108 58 C104 64 88 64 84 58 Z" fill="#3c2c22"/>
 <path d="M86 46 C90 44 102 44 106 46 L104 54 C100 56 92 56 88 54 Z" fill="#b08468"/>
 <path d="M82 24 L90 23 M101 24 L109 26" stroke="#2a1e18" stroke-width="1.6"/>
 </g>
 <rect x="9" y="78" width="75" height="21" rx="3" fill="rgba(64,64,64,.72)"/>
</svg>
 <div class="t" style="left:15.5px;top:84px;font-size:12px;font-weight:700;letter-spacing:-0.8px;color:#fff">Aadi Kapoor</div>
</div>

<!-- tile 3: Charlotte -->
<div class="a" style="left:1159px;top:298px;width:189px;height:106px;overflow:hidden;background:#e0dedc">
<svg width="189" height="106" style="left:0;top:0">
 <defs><filter id="sf3" x="-5%" y="-5%" width="110%" height="110%"><feGaussianBlur stdDeviation="0.6"/></filter></defs>
 <g filter="url(#sf3)">
 <rect x="8" y="0" width="106" height="13" fill="#d2d8d8"/>
 <rect x="117" y="0" width="70" height="13" fill="#d2d8d8"/>
 <path d="M8 12 H114 M117 12 H187" stroke="#c4c8c8" stroke-width="1"/>
 <rect x="0" y="65" width="189" height="24" fill="#a48468"/>
 <ellipse cx="9" cy="50" rx="10" ry="14" fill="none" stroke="#8a8a8a" stroke-width="1.4"/>
 <path d="M2 64 L0 80 M14 62 L20 74" stroke="#7a7a7a" stroke-width="1.2"/>
 <rect x="26" y="33" width="24" height="3" fill="#f0f0f0"/>
 <path d="M29 36 V68 M47 36 V68" stroke="#c8a888" stroke-width="1.3"/>
 <path d="M31 33 L36 22 L41 33 Z" fill="#b89050"/>
 <path d="M131 22 C131 20 140 20 150 21 C158 22 161 26 161 32 L159 50 H133 Z" fill="#f4f4f4"/>
 <path d="M138 50 L134 88 M152 50 L162 88 M145 50 V84" stroke="#c0c0c0" stroke-width="1.4"/>
 <rect x="174" y="39" width="8" height="14" rx="2" fill="#7a7a7a"/>
 <rect x="175" y="44" width="6" height="6" fill="#e8e8e8"/>
 <path d="M168 53 H186" stroke="#3a6ac8" stroke-width="2.2"/>
 <path d="M170 54 L172 70 M184 54 L182 70" stroke="#5a7ac0" stroke-width="1"/>
 <path d="M0 89 V74 C0 70 6 68 14 68 H30 C34 68 36 72 36 76 V89 Z" fill="#1e1e1e"/>
 <path d="M155 89 V76 C155 72 160 70 168 70 H189 V89 Z" fill="#1e1e1e"/>
 <!-- person -->
 <path d="M52 102 C54 80 56 62 62 54 C68 46 76 41 84 40 H102 C112 41 120 44 124 48 C130 56 134 72 137 102 Z" fill="#1c1c1e"/>
 <path d="M82 53 H102 L104 80 H80 Z" fill="#f4f4f2"/>
 <rect x="80" y="79" width="24" height="8" fill="#8c8c8c"/>
 <path d="M84 35 H100 V48 L92 54 L84 48 Z" fill="#d8b09a"/>
 <ellipse cx="92" cy="27" rx="11" ry="13.5" fill="#e4bca4"/>
 <path d="M77 25 C75 12 82 4 92 4 C102 4 108 10 106 22 L104 28 C102 18 96 14 90 16 C86 18 82 22 80 30 Z" fill="#8c6c4c"/>
 <path d="M84 8 C90 5 100 6 104 12" stroke="#c8a880" stroke-width="2" fill="none"/>
 </g>
 <rect x="0" y="88.5" width="189" height="17.5" fill="#e8e0d8"/>
 <ellipse cx="88" cy="96" rx="18" ry="6" fill="#d8b4a4"/>
 <rect x="9" y="77.5" width="104" height="21" rx="3" fill="rgba(60,60,60,.35)"/>
</svg>
 <div class="t" style="left:15px;top:82.5px;font-size:12px;font-weight:700;letter-spacing:-0.65px;color:#fff">Charlotte de Crum</div>
</div>

<!-- avatars -->
<svg width="191" height="160" style="left:1159px;top:445px">
 <defs>
  <clipPath id="av1"><circle cx="47.7" cy="33" r="23.6"/></clipPath>
  <clipPath id="av2"><circle cx="141.4" cy="33" r="24.2"/></clipPath>
  <clipPath id="av3"><circle cx="47.5" cy="127.5" r="23.6"/></clipPath>
  <filter id="avb" x="-10%" y="-10%" width="120%" height="120%"><feGaussianBlur stdDeviation="0.9"/></filter>
  <filter id="avs" x="-30%" y="-30%" width="160%" height="160%"><feGaussianBlur stdDeviation="1.5"/></filter>
 </defs>
 <circle cx="47.7" cy="34.5" r="25" fill="#000" opacity=".5" filter="url(#avs)"/>
 <circle cx="141.4" cy="34.5" r="25.5" fill="#000" opacity=".5" filter="url(#avs)"/>
 <circle cx="47.5" cy="129" r="25" fill="#000" opacity=".5" filter="url(#avs)"/>
 <circle cx="47.7" cy="33" r="24.6" fill="#111"/>
 <circle cx="141.4" cy="33" r="25.2" fill="#111"/>
 <circle cx="47.5" cy="127.5" r="24.6" fill="#111"/>
 <g clip-path="url(#av1)"><g filter="url(#avb)" transform="translate(24.1 9.4)">
  <rect width="48" height="48" fill="#3e5a2e"/>
  <ellipse cx="24" cy="6" rx="16" ry="8" fill="#7a9a50"/>
  <ellipse cx="40" cy="22" rx="10" ry="12" fill="#a05a50"/>
  <ellipse cx="8" cy="34" rx="9" ry="10" fill="#4a7a3a"/>
  <ellipse cx="6" cy="16" rx="6" ry="8" fill="#7a4a3a"/>
  <path d="M10 48 C12 40 16 37 24 37 C32 37 36 40 38 48 Z" fill="#b8a4e0"/>
  <ellipse cx="22" cy="20" rx="12" ry="10" fill="#5a4030"/>
  <ellipse cx="23.5" cy="27" rx="9" ry="12" fill="#ecc4ac"/>
  <path d="M19 31 Q23.5 34 28 31" stroke="#b06060" stroke-width="1.2" fill="none"/>
 </g></g>
 <g clip-path="url(#av2)"><g filter="url(#avb)" transform="translate(117.2 8.8)">
  <rect width="49" height="49" fill="#e6e6e4"/>
  <rect x="0" y="17" width="49" height="16" fill="#a8b4bc"/>
  <path d="M4 49 V30 C4 24 10 22 16 22 H34 C40 22 45 26 45 32 V49 Z" fill="#1e2828"/>
  <path d="M12 49 L14 32 H32 L34 49 Z" fill="#f0f0f0"/>
  <path d="M18 32 H28 L23 44 Z" fill="#d8a888"/>
  <ellipse cx="21.5" cy="22" rx="9.5" ry="11" fill="#e2b294"/>
  <path d="M10 16 C10 6 16 3 22 3 C30 3 34 8 33 16 C30 12 26 11 22 11 C16 11 13 14 12 20 Z" fill="#3a2a20"/>
 </g></g>
 <g clip-path="url(#av3)"><g filter="url(#avb)" transform="translate(23.9 103.9)">
  <rect width="48" height="48" fill="#e8e6e0"/>
  <rect x="0" y="0" width="12.5" height="48" fill="#1e3a78"/>
  <rect x="12.5" y="0" width="5" height="34" fill="#d8a830"/>
  <path d="M3 48 C4 36 12 30 24 30 C36 30 44 36 45 48 Z" fill="#f2f2f4"/>
  <path d="M4 38 H44 M3 42 H45 M3 46 H45 M8 34 H40" stroke="#2a3a6a" stroke-width="1.3"/>
  <path d="M18 30 H30 L24 38 Z" fill="#f0c8b0"/>
  <ellipse cx="24" cy="14" rx="9" ry="11" fill="#d8b880"/>
  <ellipse cx="24.5" cy="17" rx="7.5" ry="10" fill="#f0c8b0"/>
  <path d="M16 14 C16 20 15 26 17 29 L19 16 Z M32 14 C32 20 33 26 31 29 L29 16 Z" fill="#d8b880"/>
 </g></g>
</svg>
<div class="a" style="left:1276px;top:549px;width:48px;height:48px;border-radius:50%;background:#3c3c3c;box-shadow:0 2px 5px rgba(0,0,0,.45)"></div>
<div class="t" style="left:1292px;top:566px;font-size:15px;font-weight:700;letter-spacing:-0.6px;color:#f0f0f0">+6</div>

<div class="t" style="left:1176px;top:508px;font-size:12px;font-weight:700;letter-spacing:-0.85px;color:#ececec">Beth Davies</div>
<div class="t" style="left:1271px;top:508px;font-size:12px;font-weight:700;letter-spacing:-0.74px;color:#ececec">Pete Turner</div>
<div class="t" style="left:1185px;top:601.5px;font-size:12px;font-weight:700;letter-spacing:-0.86px;color:#ececec">MJ Price</div>

</body></html>
